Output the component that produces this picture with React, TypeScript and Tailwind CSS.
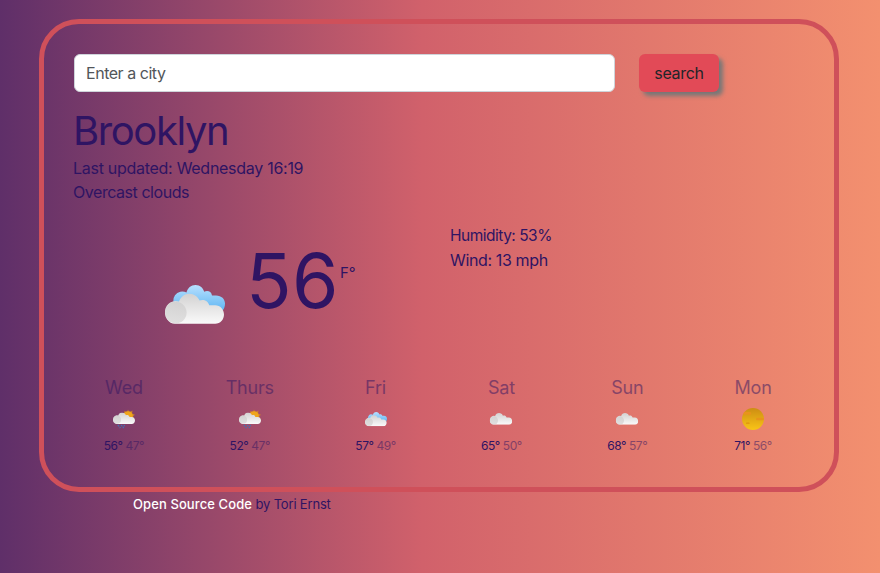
import React from "react";

type Kind = "rain" | "overcast" | "cloud" | "sun";

const CLOUD =
  "M10 38.8A10.7 11.4 0 1 1 14 16.6C15.5 12 19.5 8.7 24.3 8.7C29 8.7 33 11.6 34.6 15.6C37.5 14 43 15 44.2 20.2H50.2C55.3 20.2 59 24.5 59 29.5C59 34.5 55.3 38.8 50.2 38.8Z";

function Clouds({ back = false }: { back?: boolean }) {
  return (
    <>
      {back && (
        <path
          d="M11 22A9 9 0 0 1 21.5 7.6C22.5 3 26 0 30.5 0C35.2 0 38.2 3 39.2 6.8C42 5 46.5 6.2 47 10.4H51C56.5 10.4 60 14 60 18.5C60 24 57 28 51 28Z"
          fill="url(#sky)"
        />
      )}
      <path d={CLOUD} fill="url(#white)" />
      <circle cx="10.8" cy="27.6" r="10.8" fill="url(#shade)" />
    </>
  );
}

function WeatherIcon({ kind }: { kind: Kind }) {
  return (
    <svg className="h-8 w-8" viewBox="0 0 32 32">
      {kind === "rain" && (
        <g transform="translate(0 1)">
          <path
            d="M20 5.4L21.3 8L24.6 6.6L24 9.6L27 10.8L25 12.5L26.8 15.3L24 16L22 19L13 15L15.5 12L13.2 10.2L16.8 9.4L16.2 6.8L19 8Z"
            fill="#d98b1f"
            opacity=".75"
          />
          <circle cx="20" cy="12" r="4.8" fill="#efa51b" />
          <svg x="5" y="8.6" width="22" height="11.4" viewBox="0 8.7 59 30.1" preserveAspectRatio="none">
            <Clouds />
          </svg>
          <path
            d="M9.8 21L11.2 22.4M13 21L14.4 22.4M16.8 21L15.6 22.4M11.5 24.2L12.7 23.2M14.7 24.2L15.9 23.2"
            stroke="#4273b5"
            strokeWidth="1.1"
          />
        </g>
      )}
      {kind === "overcast" && (
        <svg x="5" y="9" width="22" height="14.3" viewBox="0 0 60 39">
          <Clouds back />
        </svg>
      )}
      {kind === "cloud" && (
        <svg x="4.8" y="10" width="22.4" height="11.8" viewBox="0 8.7 59 30.1" preserveAspectRatio="none">
          <Clouds />
        </svg>
      )}
      {kind === "sun" && (
        <>
          <circle cx="16" cy="16" r="11" fill="url(#sun)" />
          <g fill="#e8941a">
            <rect x="6.6" y="9" width="7.5" height="2.8" rx="1.3" />
            <rect x="19" y="14.8" width="7.8" height="2.4" rx="1.2" />
            <rect x="9" y="19.6" width="3.6" height="1.2" rx=".6" fill="#dd9010" />
          </g>
        </>
      )}
    </svg>
  );
}

const days: { name: string; kind: Kind; hi: string; lo: string }[] = [
  { name: "Wed", kind: "rain", hi: "56°", lo: "47°" },
  { name: "Thurs", kind: "rain", hi: "52°", lo: "47°" },
  { name: "Fri", kind: "overcast", hi: "57°", lo: "49°" },
  { name: "Sat", kind: "cloud", hi: "65°", lo: "50°" },
  { name: "Sun", kind: "cloud", hi: "68°", lo: "57°" },
  { name: "Mon", kind: "sun", hi: "71°", lo: "56°" },
];

export default function App() {
  return (
    <div className="h-[573px] w-[880px] overflow-hidden bg-[linear-gradient(90deg,#5f2f69_0%,#d1616b_48%,#f3906f_100%)] pl-[39px] pt-[19px] font-['Inter',sans-serif] text-base text-[#2f1463]">
      <svg className="absolute h-0 w-0">
        <defs>
          <linearGradient id="white" x1="0" y1="0" x2="0" y2="1">
            <stop offset="0" stopColor="#d3d2d2" />
            <stop offset="1" stopColor="#fafafa" />
          </linearGradient>
          <linearGradient id="shade" x1="0" y1=".7" x2="1" y2=".3">
            <stop offset="0" stopColor="#d0cfcf" stopOpacity="0.6" />
            <stop offset="1" stopColor="#c6c5c5" stopOpacity="0.5" />
          </linearGradient>
          <linearGradient id="sky" x1="0" y1="0" x2="0" y2="1">
            <stop offset="0" stopColor="#b8e0ff" />
            <stop offset="1" stopColor="#58b3f2" />
          </linearGradient>
          <linearGradient id="sun" x1="0" y1="0" x2="0" y2="1">
            <stop offset="0" stopColor="#cd8d13" />
            <stop offset="1" stopColor="#f9c416" />
          </linearGradient>
        </defs>
      </svg>

      <main className="h-[473px] w-[800px] rounded-[40px] border-[5px] border-[#cf505a] p-[30px]">
        <form className="flex gap-6" onSubmit={(e) => e.preventDefault()}>
          <input
            className="h-[38px] w-[541px] rounded-md border border-[#ced4da] bg-white pb-px pl-[11px] pr-3 tracking-[-0.47px] text-[#212529] placeholder:text-[#52565a]"
            placeholder="Enter a city"
          />
          <button className="h-[38px] w-20 rounded-md bg-[#e24a57] pb-px tracking-[-0.3px] text-[#212529] shadow-[4px_4px_4px_#777]">
            search
          </button>
        </form>

        <div className="-ml-px">
          <h1 className="mt-[15px] h-[49px] whitespace-nowrap text-[40px] leading-[48px] tracking-[-1.4px]">Brooklyn</h1>
          <p className="whitespace-nowrap leading-6 tracking-[-0.28px]">Last updated: Wednesday 16:19</p>
          <p className="whitespace-nowrap leading-6 tracking-[-0.45px]">Overcast clouds</p>
        </div>

        <section className="flex h-[164px] pt-[19px]">
          <div className="flex w-[376px] pl-[91px]">
            <svg className="mt-[62px] h-[39px] w-[60px]" viewBox="0 0 60 39">
              <Clouds back />
            </svg>
            <span className="ml-[21px] mt-[13px] w-[94px] text-[75px] leading-[90px] tracking-[0.5px]">56</span>
            <span className="mt-[38px] text-[15px] leading-6">F°</span>
          </div>
          <div className="pt-px leading-6">
            <p className="text-[15.5px] tracking-[-0.5px]">Humidity: 53%</p>
            <p className="tracking-[-0.37px]">Wind: 13 mph</p>
          </div>
        </section>

        <section className="-ml-[13px] -mr-3 grid grid-cols-6 pt-1.5">
          {days.map((d) => (
            <div key={d.name} className="flex flex-col items-center">
              <div className="text-lg leading-[27px] tracking-[-0.2px] opacity-50">{d.name}</div>
              <div className="mt-0.5 h-8">
                <WeatherIcon kind={d.kind} />
              </div>
              <div className="mt-0.5 whitespace-nowrap text-xs leading-[18px] tracking-[-0.45px]">
                {d.hi} <span className="opacity-50">{d.lo}</span>
              </div>
            </div>
          ))}
        </section>
      </main>

      <footer className="ml-[94px] mt-[2px] whitespace-nowrap text-[13px] leading-5 tracking-[-0.18px]">
        <a className="font-medium tracking-[0.1px] text-white">Open Source Code</a> by Tori Ernst
      </footer>
    </div>
  );
}
